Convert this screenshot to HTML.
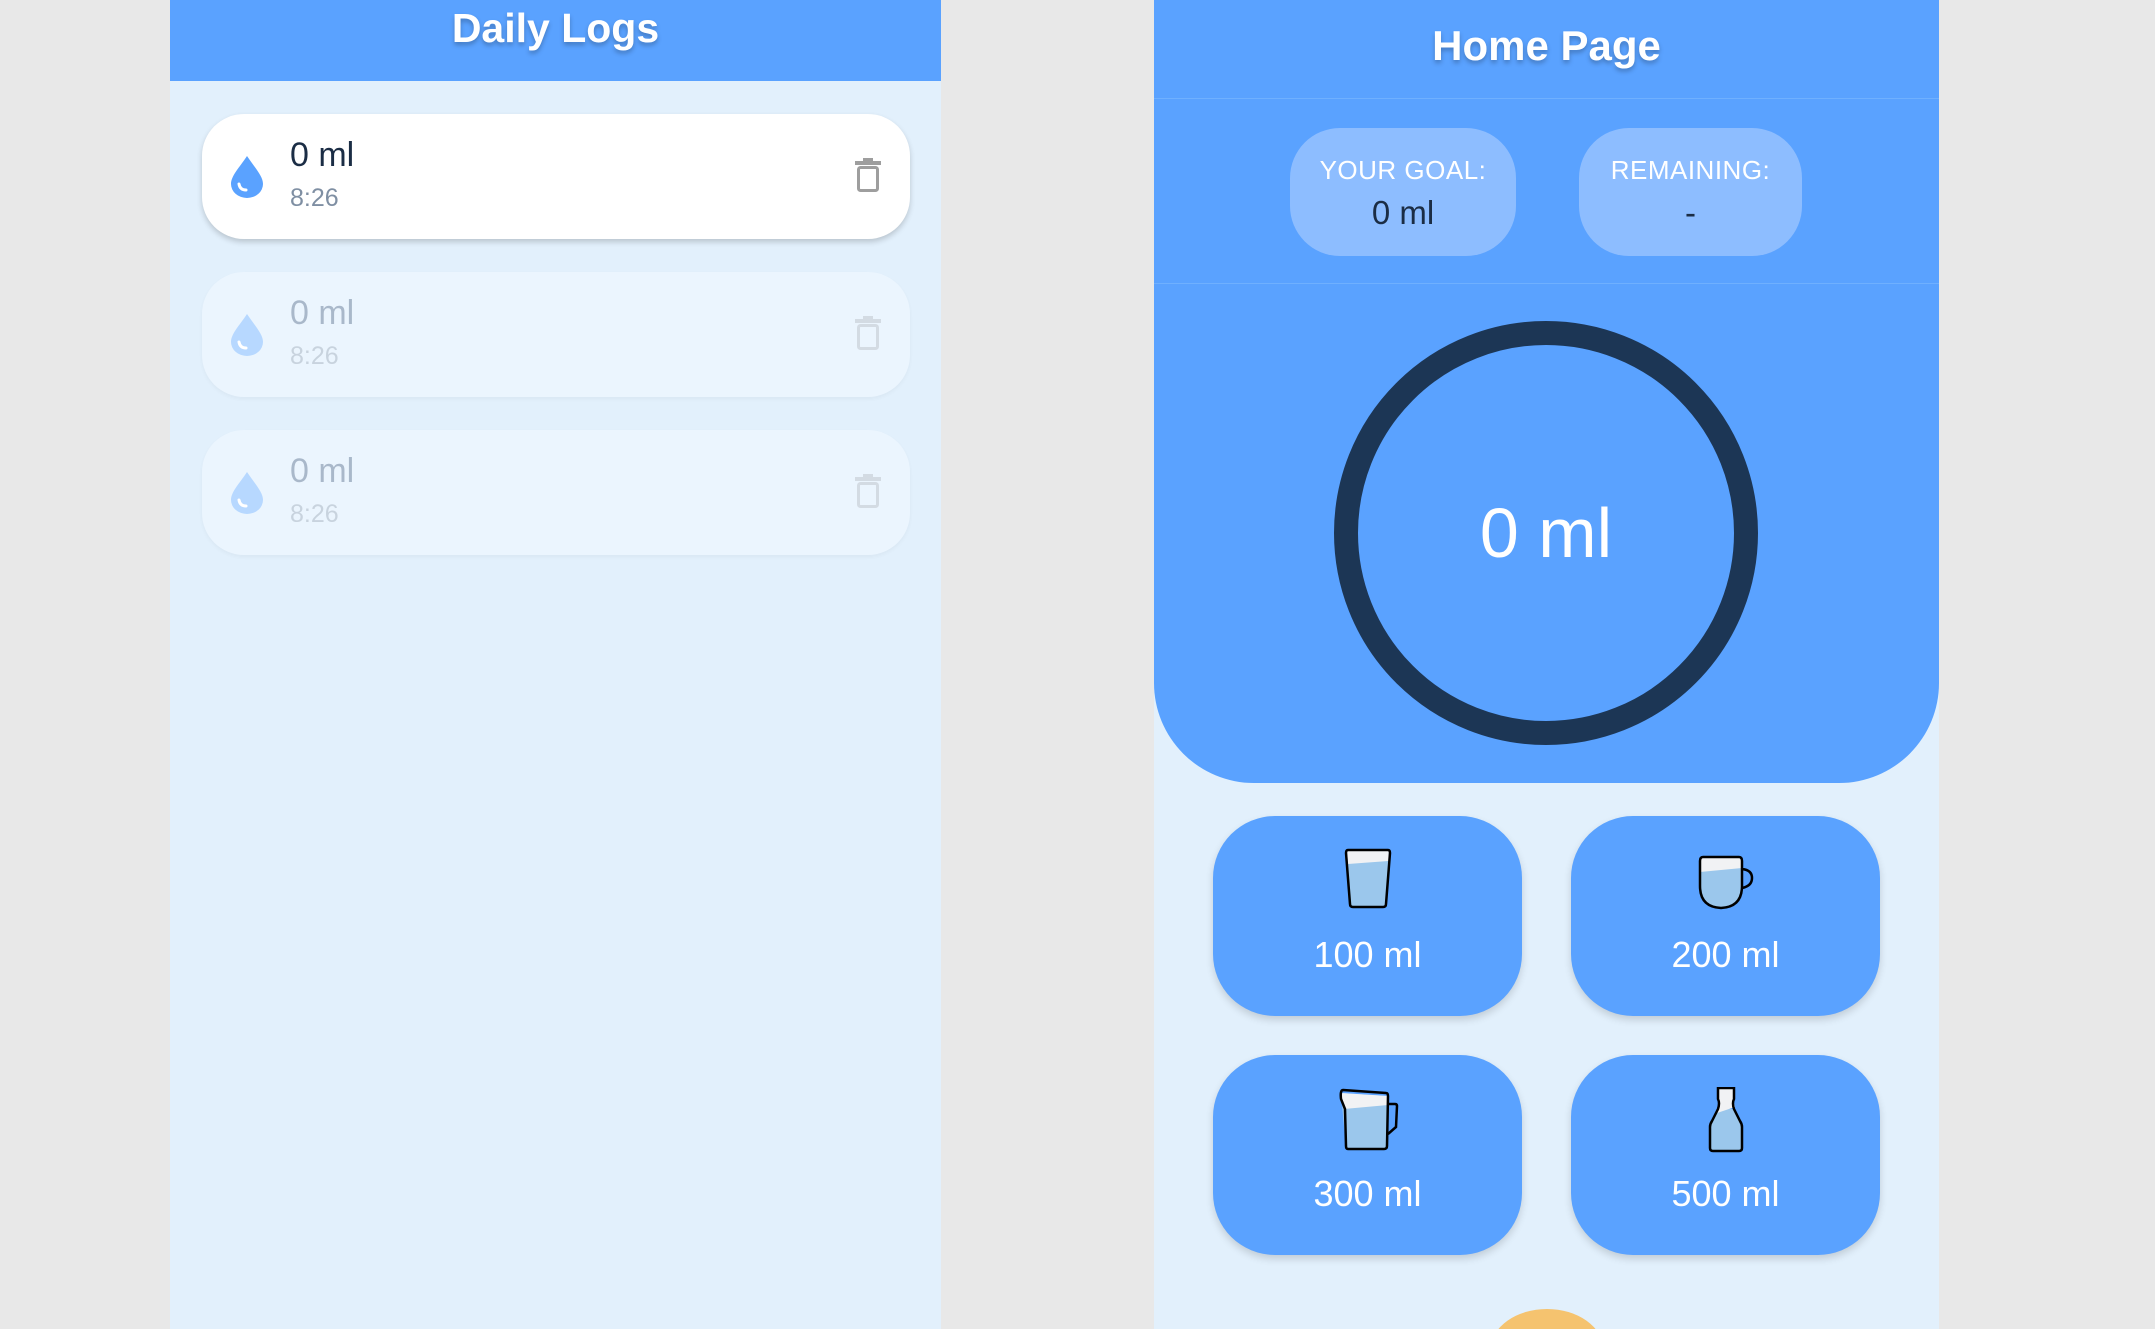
<!DOCTYPE html>
<html><head><meta charset="utf-8"><style>
*{margin:0;padding:0;box-sizing:border-box}
html{width:2155px;height:1329px;overflow:hidden}
body{width:2155px;height:1329px;background:#e8e8e8;position:relative;overflow:hidden;font-family:"Liberation Sans",sans-serif}
.abs{position:absolute}
#left{left:170px;top:0;width:771px;height:1329px;background:#e2f0fc}
#lh{left:0;top:0;width:771px;height:81px;background:#5aa2ff;color:#fff;font-size:41px;font-weight:bold;text-align:center;line-height:56px;text-shadow:0 3px 5px rgba(0,0,0,.25)}
.card{left:32px;width:708px;height:125px;border-radius:42px;background:#fff;box-shadow:0 3px 6px rgba(0,0,0,.18)}
.card.f{background:#ebf5fe;box-shadow:0 2px 4px rgba(0,0,0,.04)}
.t1{left:88px;top:22px;font-size:34px;color:#1b2d45}
.t2{left:88px;top:70px;font-size:25px;color:#7f8fa3}
.f .t1{color:#a9b8ca}.f .t2{color:#c8d3de}
.drop{left:27px;top:40px}
.trash{left:653px;top:44px}
#right{left:1154px;top:0;width:785px;height:1329px;background:#e2f0fc;overflow:hidden}
#top{left:0;top:0;width:785px;height:783px;background:#5aa2ff;border-radius:0 0 100px 100px}
#rh{left:0;top:0;width:785px;height:99px;color:#fff;font-size:42px;font-weight:bold;text-align:center;line-height:92px;text-shadow:0 3px 5px rgba(0,0,0,.25);border-bottom:1px solid #6fb0ff}
#sep{left:0;top:283px;width:785px;height:1px;background:#6fb0ff}
.pill{top:128px;height:128px;background:#8dbdff;border-radius:50px;text-align:center}
.pl{font-size:26px;color:#fff;margin-top:27px;letter-spacing:.5px}
.pv{font-size:33px;color:#1b2d45;margin-top:8px}
#ring{left:180px;top:321px;width:424px;height:424px;border-radius:50%;border:24px solid #1c3655}
#rt{left:0;top:0;width:376px;height:376px;line-height:376px;text-align:center;color:#fff;font-size:70px}
.btn{width:309px;height:200px;background:#5aa2ff;border-radius:62px;box-shadow:0 4px 8px rgba(0,0,0,.15);text-align:center;color:#fff;font-size:36px}
.btn svg{position:absolute;left:50%;transform:translateX(-50%);top:32px}
.btn span{position:absolute;left:0;right:0;top:118px}
#orange{left:337px;top:1309px;width:112px;height:80px;border-radius:50%;background:#f5c36f}
</style></head><body>
<div id="left" class="abs">
 <div id="lh" class="abs">Daily Logs</div>
 <div class="card abs" style="top:114px">
  <svg class="abs drop" width="36" height="44" viewBox="0 0 36 44"><path d="M18 2 C10 14 2 22 2 30 a16 14 0 0 0 32 0 C34 22 26 14 18 2Z" fill="#5aa2ff"/><path d="M10 30 q1 6 7 6" stroke="#fff" stroke-width="3" fill="none" stroke-linecap="round"/></svg>
  <div class="abs t1">0 ml</div><div class="abs t2">8:26</div>
  <svg class="abs trash" width="26" height="34" viewBox="0 0 26 34"><rect x="0" y="3" width="26" height="4" fill="#9e9e9e"/><rect x="8" y="0" width="10" height="4" fill="#9e9e9e"/><rect x="3.5" y="9.5" width="19" height="23" rx="2" fill="none" stroke="#9e9e9e" stroke-width="3"/></svg>
 </div>
 <div class="card f abs" style="top:272px">
  <svg class="abs drop" width="36" height="44" viewBox="0 0 36 44"><path d="M18 2 C10 14 2 22 2 30 a16 14 0 0 0 32 0 C34 22 26 14 18 2Z" fill="#b7d8ff"/><path d="M10 30 q1 6 7 6" stroke="#fff" stroke-width="3" fill="none" stroke-linecap="round"/></svg>
  <div class="abs t1">0 ml</div><div class="abs t2">8:26</div>
  <svg class="abs trash" width="26" height="34" viewBox="0 0 26 34"><rect x="0" y="3" width="26" height="4" fill="#d3dbe3"/><rect x="8" y="0" width="10" height="4" fill="#d3dbe3"/><rect x="3.5" y="9.5" width="19" height="23" rx="2" fill="none" stroke="#d3dbe3" stroke-width="3"/></svg>
 </div>
 <div class="card f abs" style="top:430px">
  <svg class="abs drop" width="36" height="44" viewBox="0 0 36 44"><path d="M18 2 C10 14 2 22 2 30 a16 14 0 0 0 32 0 C34 22 26 14 18 2Z" fill="#b7d8ff"/><path d="M10 30 q1 6 7 6" stroke="#fff" stroke-width="3" fill="none" stroke-linecap="round"/></svg>
  <div class="abs t1">0 ml</div><div class="abs t2">8:26</div>
  <svg class="abs trash" width="26" height="34" viewBox="0 0 26 34"><rect x="0" y="3" width="26" height="4" fill="#d3dbe3"/><rect x="8" y="0" width="10" height="4" fill="#d3dbe3"/><rect x="3.5" y="9.5" width="19" height="23" rx="2" fill="none" stroke="#d3dbe3" stroke-width="3"/></svg>
 </div>
</div>
<div id="right" class="abs">
 <div id="top" class="abs">
  <div id="rh" class="abs">Home Page</div>
  <div id="sep" class="abs"></div>
  <div class="pill abs" style="left:136px;width:226px"><div class="pl">YOUR GOAL:</div><div class="pv">0 ml</div></div>
  <div class="pill abs" style="left:425px;width:223px"><div class="pl">REMAINING:</div><div class="pv">-</div></div>
  <div id="ring" class="abs"><div id="rt" class="abs">0 ml</div></div>
 </div>
 <div class="btn abs" style="left:59px;top:816px"><svg width="50" height="62" viewBox="0 0 50 62"><path d="M4 3 L46 3 L42 58 L8 58Z" fill="#9bc7ec"/><path d="M4 3 L46 3 L45.3 13 L5 16Z" fill="#f1f2f4"/><path d="M5 2 L45 2 Q47 2 47 5 L43 56 Q43 59 40 59 L10 59 Q7 59 7 56 L3 5 Q3 2 5 2Z" fill="none" stroke="#000" stroke-width="2.5"/></svg><span>100 ml</span></div>
 <div class="btn abs" style="left:417px;top:816px"><svg width="64" height="62" viewBox="0 0 64 62"><path d="M6 10 L48 10 L48 38 Q48 58 27 60 Q6 58 6 38Z" fill="#9bc7ec"/><path d="M6 10 L48 10 L48 20 L6 24Z" fill="#f1f2f4"/><path d="M9 9 L45 9 Q48 9 48 13 L48 38 Q48 59 27 60 Q6 59 6 38 L6 13 Q6 9 9 9Z M48 21 Q58 22 58 30 Q58 38 48 40" fill="none" stroke="#000" stroke-width="2.5"/></svg><span>200 ml</span></div>
 <div class="btn abs" style="left:59px;top:1055px"><svg width="66" height="66" viewBox="0 0 66 66"><path d="M6 6 L53 9 L52 62 L11 62Z" fill="#9bc7ec"/><path d="M6 6 L53 9 L53 18 L9 22Z" fill="#f1f2f4"/><path d="M8 3 L51 6 Q53 6 53 9 L52 59 Q52 62 49 62 L13 62 Q11 62 11 59 L10 22 L6 12 Q5 3 8 3Z M53 17 L60 17 Q62 17 62 19 L61 40 L53 47" fill="none" stroke="#000" stroke-width="2.5"/></svg><span>300 ml</span></div>
 <div class="btn abs" style="left:417px;top:1055px"><svg width="40" height="66" viewBox="0 0 40 66"><path d="M13 22 L27 22 L35 37 L35 64 L5 64 L5 37Z" fill="#9bc7ec"/><path d="M13 2 L27 2 L27 12 L29 20 L11 26 L13 12Z" fill="#f1f2f4"/><path d="M12 1 L28 1 L28 12 Q26 16 28 22 L34 34 Q36 37 36 40 L36 61 Q36 64 33 64 L7 64 Q4 64 4 61 L4 40 Q4 37 6 34 L12 22 Q14 16 12 12Z" fill="none" stroke="#000" stroke-width="2.5"/></svg><span>500 ml</span></div>
 <div id="orange" class="abs"></div>
</div>
</body></html>
